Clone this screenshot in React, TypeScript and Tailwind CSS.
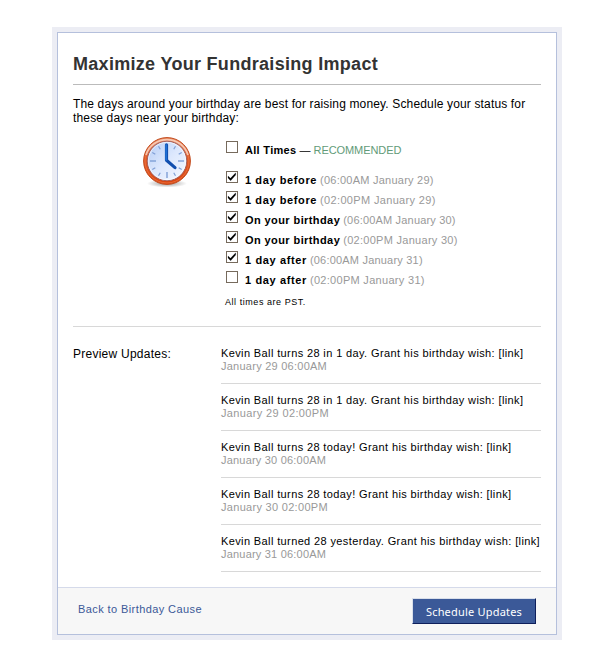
const times = [
  { label: '1 day before', when: '(06:00AM January 29)', on: true, tracking: 'tracking-[0.6px]', dateTracking: 'tracking-[0.24px]' },
  { label: '1 day before', when: '(02:00PM January 29)', on: true, tracking: 'tracking-[0.6px]', dateTracking: 'tracking-[0.34px]' },
  { label: 'On your birthday', when: '(06:00AM January 30)', on: true, tracking: 'tracking-[0.41px]', dateTracking: 'tracking-[0.18px]' },
  { label: 'On your birthday', when: '(02:00PM January 30)', on: true, tracking: 'tracking-[0.41px]', dateTracking: 'tracking-[0.28px]' },
  { label: '1 day after', when: '(06:00AM January 31)', on: true, tracking: 'tracking-[0.62px]', dateTracking: 'tracking-[0.2px]' },
  { label: '1 day after', when: '(02:00PM January 31)', on: false, tracking: 'tracking-[0.62px]', dateTracking: 'tracking-[0.3px]' },
];

const updates = [
  { text: 'Kevin Ball turns 28 in 1 day. Grant his birthday wish: [link]', when: 'January 29 06:00AM', dateTracking: 'tracking-[0.25px]' },
  { text: 'Kevin Ball turns 28 in 1 day. Grant his birthday wish: [link]', when: 'January 29 02:00PM', dateTracking: 'tracking-[0.36px]' },
  { text: 'Kevin Ball turns 28 today! Grant his birthday wish: [link]', when: 'January 30 06:00AM', dateTracking: 'tracking-[0.2px]' },
  { text: 'Kevin Ball turns 28 today! Grant his birthday wish: [link]', when: 'January 30 02:00PM', dateTracking: 'tracking-[0.3px]' },
  { text: 'Kevin Ball turned 28 yesterday. Grant his birthday wish: [link]', when: 'January 31 06:00AM', dateTracking: 'tracking-[0.2px]' },
];

function Box({ on }: { on: boolean }) {
  return (
    <svg width="12" height="12" viewBox="0 0 12 12" className="mt-px block shrink-0">
      <rect x="0.5" y="0.5" width="11" height="11" fill="#fff" stroke="#766a5c" />
      {on && <path d="M2 5 L4.5 7.3 L9.7 1.8 V4 L4.6 9.8 L2 7 Z" fill="#000" stroke="#000" strokeWidth="0.2" />}
    </svg>
  );
}

function Clock() {
  const ticks = [30, 60, 90, 120, 150, 180, 210, 240, 270, 300, 330];
  return (
    <svg width="50" height="54" viewBox="0 0 50 54" className="block">
      <defs>
        <linearGradient id="rim" x1="0" y1="0" x2="0" y2="1">
          <stop offset="0" stopColor="#e58a63" />
          <stop offset="0.45" stopColor="#df5a28" />
          <stop offset="1" stopColor="#d8430f" />
        </linearGradient>
        <linearGradient id="face" x1="0" y1="0" x2="1" y2="1">
          <stop offset="0" stopColor="#b4ccf5" />
          <stop offset="0.5" stopColor="#dde8fd" />
          <stop offset="1" stopColor="#f6f9ff" />
        </linearGradient>
        <radialGradient id="shade">
          <stop offset="0" stopColor="#000" stopOpacity="0.4" />
          <stop offset="1" stopColor="#000" stopOpacity="0" />
        </radialGradient>
      </defs>
      <ellipse cx="25" cy="47.5" rx="20" ry="4" fill="url(#shade)" />
      <circle cx="25" cy="25" r="23.4" fill="url(#rim)" stroke="#c24a1c" strokeWidth="1" />
      <circle cx="25" cy="25" r="22" fill="none" stroke="#f07a48" strokeWidth="0.7" />
      <path d="M4 19 A22 22 0 0 1 46 19" fill="none" stroke="#fff0e6" strokeWidth="1.8" opacity="0.65" />
      <circle cx="25" cy="25" r="19.7" fill="url(#face)" stroke="#9d5a58" strokeWidth="0.9" />
      <circle cx="25" cy="25" r="18.7" fill="none" stroke="#fff" strokeWidth="1" opacity="0.6" />
      {ticks.map((a) => (
        <line key={a} x1="25" x2="25" y1="8" y2={a % 90 === 0 ? 14 : 11.5}
          stroke="#7f9fd6" strokeWidth={a % 90 === 0 ? 1.4 : 1.2} transform={`rotate(${a} 25 25)`} />
      ))}
      <path d="M24.5 8.8 V24.3 L33 31.6" fill="none" stroke="#124fae" strokeWidth="3.2" strokeLinecap="round" strokeLinejoin="round" />
      <path d="M24.1 9 V24" fill="none" stroke="#247be0" strokeWidth="1.3" strokeLinecap="round" />
    </svg>
  );
}

export default function App() {
  return (
    <main className="w-[615px] h-[671px] bg-white pt-[27px] pl-[52px] font-['Liberation_Sans',Arial,sans-serif] text-black">
      <div className="w-[510px] h-[613px] bg-[#ecedf4] p-[5px]">
        <div className="flex h-full flex-col border border-[#b5c0dc] bg-white">
          <section className="flex h-[554px] flex-col px-[15px]">
            <h1 className="h-[52px] border-b border-[#bbb] pt-[20px] text-[18px] leading-[22px] font-bold tracking-[0.3px] text-[#333] whitespace-nowrap">Maximize Your Fundraising Impact</h1>
            <p className="pt-[12px] text-[12px] leading-[14px] tracking-[0.15px] whitespace-nowrap">The days around your birthday are best for raising money. Schedule your status for<br />these days near your birthday:</p>
            <div className="flex h-[202px] border-b border-[#d8d8d8]">
              <div className="w-[152px] pt-[11px] pl-[69px]"><Clock /></div>
              <div className="pt-[15px] text-[11px] leading-[13px] whitespace-nowrap">
                <div className="flex h-[30px] gap-[7px] pl-[1px]">
                  <Box on={false} />
                  <div className="pt-[4px]"><b className="tracking-[0.3px]">All Times</b> — <span className="tracking-[-0.08px] text-[#629b78]">RECOMMENDED</span></div>
                </div>
                {times.map((t, i) => (
                  <div key={i} className="flex h-[20px] gap-[7px] pl-[1px]">
                    <Box on={t.on} />
                    <div className="pt-[4px]"><b className={t.tracking}>{t.label}</b> <span className={`${t.dateTracking} text-[#999]`}>{t.when}</span></div>
                  </div>
                ))}
                <div className="pt-[6px] text-[9px] leading-[12px] tracking-[0.55px]">All times are PST.</div>
              </div>
            </div>
            <div className="flex pt-[20px]">
              <div className="w-[148px] text-[12px] leading-[14px] tracking-[0.25px]">Preview Updates:</div>
              <div className="w-[320px] text-[11px] leading-[13px] whitespace-nowrap">
                {updates.map((u, i) => (
                  <div key={i} className="mb-[10px] h-[37px] border-b border-[#d8d8d8]">
                    <div className="tracking-[0.38px]">{u.text}</div>
                    <div className={`${u.dateTracking} text-[#999]`}>{u.when}</div>
                  </div>
                ))}
              </div>
            </div>
          </section>
          <footer className="flex flex-1 items-start justify-between border-t border-[#d5daea] bg-[#f7f7f7] pr-[20px] pl-[20px] pt-[10px]">
            <a className="pt-[5px] text-[11px] leading-[13px] tracking-[0.41px] text-[#3b5998] whitespace-nowrap">Back to Birthday Cause</a>
            <button className="h-[26px] w-[124px] border border-t-[#d9dfea] border-l-[#d9dfea] border-r-[#0e1f5b] border-b-[#0e1f5b] bg-[#3b5998] font-['Noto_Sans',sans-serif] text-[11px] leading-[13px] tracking-[0.2px] text-white whitespace-nowrap">Schedule Updates</button>
          </footer>
        </div>
      </div>
    </main>
  );
}
